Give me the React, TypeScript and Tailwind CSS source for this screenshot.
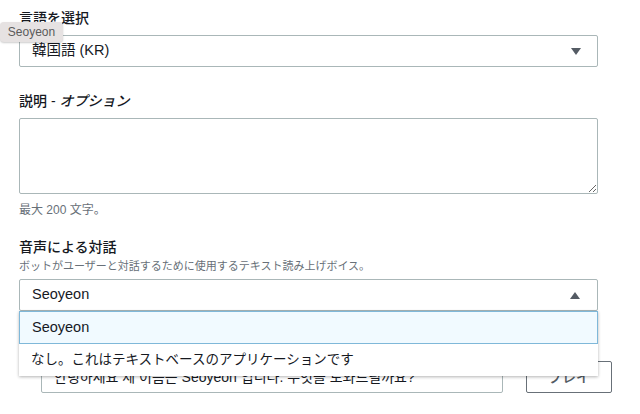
import React from "react";

function Caret({ up }: { up?: boolean }) {
  return (
    <svg width="10" height="7" viewBox="0 0 10 7" className="shrink-0">
      {up ? <polygon points="0,7 10,7 5,0" fill="#545b64" /> : <polygon points="0,0 10,0 5,7" fill="#545b64" />}
    </svg>
  );
}

export default function App() {
  return (
    <div className="relative w-[640px] h-[414px] overflow-hidden bg-white text-[#16191f]" style={{ fontFamily: '"Liberation Sans", "Noto Sans CJK JP", sans-serif' }}>
      <div className="flex flex-col pl-[19px] pt-[7px]">
        <div className="h-[22px] leading-[22px] text-[14px] font-medium">言語を選択</div>
        <div className="mt-[6px] h-[32px] w-[579px] flex items-center justify-between border border-[#aab7b8] rounded-[2px] pl-[12px] pr-[16px] text-[14.5px]">
          <span>韓国語 (KR)</span>
          <Caret />
        </div>

        <div className="mt-[23px] h-[22px] leading-[22px] text-[14px] font-medium">
          説明 - <i>オプション</i>
        </div>
        <textarea className="mt-[6px] h-[76px] w-[579px] border border-[#aab7b8] rounded-[2px] resize-y block" />
        <div className="mt-[8px] h-[16px] leading-[16px] text-[12px] text-[#687078]">最大 200 文字。</div>

        <div className="mt-[18px] h-[22px] leading-[22px] text-[14px] font-medium">音声による対話</div>
        <div className="h-[16px] leading-[16px] text-[11px] text-[#687078]">ボットがユーザーと対話するために使用するテキスト読み上げボイス。</div>
        <div className="relative mt-[5px] w-[579px]">
          <div className="h-[32px] flex items-center justify-between border border-[#aab7b8] rounded-[2px] pl-[12px] pr-[17px] text-[14.5px]">
            <span>Seoyeon</span>
            <Caret up />
          </div>
          <div className="absolute left-0 top-[32px] w-[579px] bg-white z-10 shadow-[0_1px_3px_rgba(0,0,0,0.3)] text-[14.5px]">
            <div className="h-[33px] flex items-center pl-[12px] border border-[#7fb8d9] bg-[#f1faff]">Seoyeon</div>
            <div className="h-[32px] flex items-center pl-[12px] text-[13.5px]">なし。これはテキストベースのアプリケーションです</div>
          </div>
        </div>

        <div className="mt-[50px] pl-[22px] flex items-center">
          <div className="shrink-0 h-[32px] w-[462px] border border-[#aab7b8] rounded-[2px] flex items-center pl-[12px] text-[14px] whitespace-nowrap overflow-hidden">
            안녕하세요 제 이름은 Seoyeon 입니다. 무엇을 도와드릴까요?
          </div>
          <div className="shrink-0 ml-[23px] h-[32px] w-[86px] border border-[#687078] rounded-[2px] flex items-center justify-center text-[14px] font-medium text-[#545b64]">
            プレイ
          </div>
        </div>
      </div>

      <div className="absolute left-0 top-[22px] h-[20px] w-[63px] rounded-[4px] bg-[#e6e2e2] shadow-[0_1px_2px_rgba(0,0,0,0.2)] flex items-center justify-center text-[12px] text-[#5b5b5b]">
        Seoyeon
      </div>
    </div>
  );
}
